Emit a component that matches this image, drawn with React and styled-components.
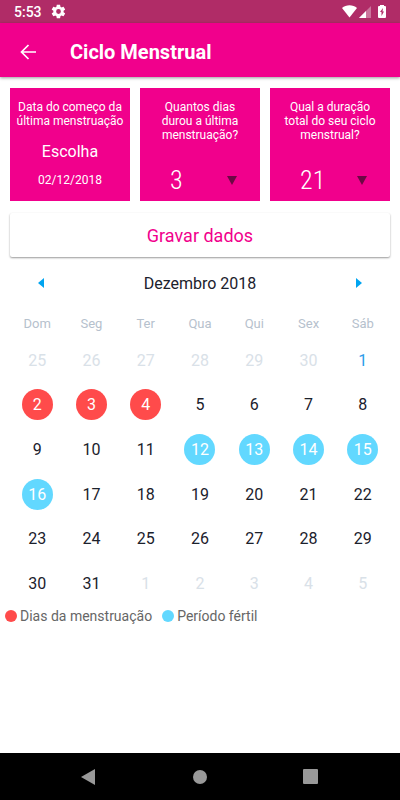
import React from "react";
import styled, { createGlobalStyle } from "styled-components";

const weekDays = ["Dom", "Seg", "Ter", "Qua", "Qui", "Sex", "Sáb"];

const weeks = [
  [25, 26, 27, 28, 29, 30, 1],
  [2, 3, 4, 5, 6, 7, 8],
  [9, 10, 11, 12, 13, 14, 15],
  [16, 17, 18, 19, 20, 21, 22],
  [23, 24, 25, 26, 27, 28, 29],
  [30, 31, 1, 2, 3, 4, 5]
];

const TODAY = 1;
const FERTILE_DAYS = [12, 13, 14, 15, 16];

const range = (from, to) =>
  Array.from({ length: to - from + 1 }, (_, i) => from + i);

const getDayKind = (week, day, periodLength) => {
  if ((week === 0 && day > 7) || (week === 5 && day < 7)) return "outside";
  if (day >= 2 && day < 2 + periodLength) return "period";
  if (FERTILE_DAYS.includes(day)) return "fertile";
  if (day === TODAY) return "today";
  return "normal";
};

const dayColors = {
  outside: "#d9e1e8",
  period: "#ffffff",
  fertile: "#ffffff",
  today: "#2d9cea",
  normal: "#1b212c"
};

const dayBackgrounds = {
  period: "#ff4b4b",
  fertile: "#62d8ff"
};

const App = () => {
  const [periodLength, setPeriodLength] = React.useState(3);
  const [cycleLength, setCycleLength] = React.useState(21);

  return (
    <Screen>
      <GlobalStyle />
      <StatusBar>
        <StatusGroup>
          <span>5:53</span>
          <svg width="15" height="15" viewBox="1 1 22 22" fill="#fff">
            <path d="M19.4 13a7.500 7.500 0 0 0 0-2l2.100-1.600c.2-.2.200-.4.100-.6l-2-3.500c-.1-.2-.4-.3-.6-.2l-2.500 1a7.300 7.300 0 0 0-1.700-1l-.4-2.600c0-.3-.2-.5-.5-.5h-4c-.3 0-.5.200-.5.500L9 5.100c-.6.300-1.200.6-1.700 1l-2.500-1c-.2-.1-.5 0-.6.200l-2 3.500c-.1.200-.1.500.1.600L4.500 11a7.500 7.500 0 0 0 0 2l-2.200 1.600c-.2.200-.2.400-.1.600l2 3.500c.1.200.4.300.6.200l2.500-1c.5.400 1.100.8 1.700 1l.4 2.600c0 .3.200.5.500.5h4c.3 0 .5-.2.500-.5l.4-2.600c.6-.3 1.200-.6 1.700-1l2.500 1c.2.100.5 0 .6-.2l2-3.500c.1-.2.100-.5-.1-.6zM12 15.500a3.500 3.500 0 1 1 0-7 3.500 3.500 0 0 1 0 7z" />
          </svg>
        </StatusGroup>
        <StatusIcons>
          <svg width="15" height="13" viewBox="0 0 15 13">
            <path d="M0 3C4-.7 11-.7 15 3L7.500 12.500z" fill="#fff" />
          </svg>
          <svg width="12" height="12" viewBox="0 0 12 12">
            <path d="M12 0v12H0z" fill="#fff" opacity=".35" />
            <path d="M7 5v7H0z" fill="#fff" />
          </svg>
          <svg width="8" height="13" viewBox="0 0 8 13">
            <path d="M2 1V0h4v1h1q1 0 1 1v10q0 1-1 1H1q-1 0-1-1V2q0-1 1-1z" fill="#fff" />
            <path d="M5 3L2 7h1.500v4L6 6.500H4.500z" fill="#b02c67" />
          </svg>
        </StatusIcons>
      </StatusBar>

      <Header>
        <BackButton aria-label="Voltar">
          <svg width="16" height="16" viewBox="0 0 16 16" fill="none" stroke="#fff" strokeWidth="1.700">
            <path d="M16 8H1.500M8.500 1L1.500 8l7 7" />
          </svg>
        </BackButton>
        <Title>Ciclo Menstrual</Title>
      </Header>

      <Content>
        <Cards>
          <Card $inset={6}>
            <CardLabel>Data do começo da última menstruação</CardLabel>
            <DateButton>Escolha</DateButton>
            <DateValue>02/12/2018</DateValue>
          </Card>
          <Card $inset={14}>
            <CardLabel as="label" htmlFor="period">
              Quantos dias durou a última menstruação?
            </CardLabel>
            <SelectBox>
              <Select
                id="period"
                value={periodLength}
                onChange={e => setPeriodLength(Number(e.target.value))}
              >
                {range(1, 10).map(n => (
                  <option key={n}>{n}</option>
                ))}
              </Select>
              <Caret />
            </SelectBox>
          </Card>
          <Card $inset={14}>
            <CardLabel as="label" htmlFor="cycle">
              Qual a duração total do seu ciclo menstrual?
            </CardLabel>
            <SelectBox>
              <Select
                id="cycle"
                value={cycleLength}
                onChange={e => setCycleLength(Number(e.target.value))}
              >
                {range(21, 35).map(n => (
                  <option key={n}>{n}</option>
                ))}
              </Select>
              <Caret />
            </SelectBox>
          </Card>
        </Cards>

        <SaveButton>Gravar dados</SaveButton>

        <MonthBar>
          <MonthButton aria-label="Mês anterior">
            <svg width="6" height="10" viewBox="0 0 6 10">
              <path d="M6 0v10L0 5z" fill="#00a4f0" />
            </svg>
          </MonthButton>
          <Month>Dezembro 2018</Month>
          <MonthButton aria-label="Próximo mês">
            <svg width="6" height="10" viewBox="0 0 6 10">
              <path d="M0 0v10l6-5z" fill="#00a4f0" />
            </svg>
          </MonthButton>
        </MonthBar>

        <Calendar>
          <thead>
            <tr>
              {weekDays.map(name => (
                <WeekDay key={name}>{name}</WeekDay>
              ))}
            </tr>
          </thead>
          <tbody>
            {weeks.map((week, i) => (
              <tr key={i}>
                {week.map(day => (
                  <DayCell key={day}>
                    <Day $kind={getDayKind(i, day, periodLength)}>{day}</Day>
                  </DayCell>
                ))}
              </tr>
            ))}
          </tbody>
        </Calendar>
      </Content>

      <Legend>
        <LegendItem>
          <Dot $color={dayBackgrounds.period} />
          Dias da menstruação
        </LegendItem>
        <LegendItem>
          <Dot $color={dayBackgrounds.fertile} />
          Período fértil
        </LegendItem>
      </Legend>

      <NavBar>
        <NavButton aria-label="Voltar">
          <svg width="16" height="16" viewBox="0 0 16 16" fill="#999">
            <path d="M14 0v16L0 8z" />
          </svg>
        </NavButton>
        <NavButton aria-label="Início">
          <svg width="16" height="16" viewBox="0 0 16 16" fill="#999">
            <circle cx="8" cy="8" r="7" />
          </svg>
        </NavButton>
        <NavButton aria-label="Recentes">
          <svg width="16" height="16" viewBox="0 0 16 16" fill="#999">
            <rect width="15" height="15" rx="1" />
          </svg>
        </NavButton>
      </NavBar>
    </Screen>
  );
};

const GlobalStyle = createGlobalStyle`
  * {
    box-sizing: border-box;
  }
  body {
    margin: 0;
    background: #fff;
    font-family: Roboto, sans-serif;
  }
  button, select {
    padding: 0;
    border: none;
    background: transparent;
    font-family: inherit;
    cursor: pointer;
  }
  svg {
    display: block;
  }
`;

const Screen = styled.div`
  display: flex;
  flex-direction: column;
  min-height: 100vh;
`;

const StatusBar = styled.div`
  display: flex;
  justify-content: space-between;
  align-items: center;
  height: 23px;
  padding: 0 14px;
  background: #b02c67;
  color: #fff;
  font-size: 14px;
  font-weight: 500;
`;

const StatusGroup = styled.div`
  display: flex;
  align-items: center;
  gap: 9px;
`;

const StatusIcons = styled.div`
  display: flex;
  align-items: center;
  gap: 2px;

  svg:last-child {
    margin-left: 5px;
  }
`;

const Header = styled.header`
  display: flex;
  align-items: center;
  gap: 34px;
  height: 54px;
  padding: 3px 20px 0;
  background: #f1008c;
  box-shadow: 0 1px 3px rgba(0, 0, 0, 0.4);
`;

const BackButton = styled.button`
  display: flex;
`;

const Title = styled.h1`
  margin: 0;
  color: #fff;
  font-size: 20px;
  font-weight: 700;
`;

const Content = styled.main`
  padding: 11px 10px 0;
`;

const Cards = styled.div`
  display: grid;
  grid-template-columns: repeat(3, 1fr);
  gap: 10px;
`;

const Card = styled.section`
  display: flex;
  flex-direction: column;
  align-items: center;
  height: 113px;
  padding-top: 12px;
  background: #f1008c;
  color: #fff;
  text-align: center;

  > :first-child {
    padding: 0 ${({ $inset }) => $inset}px;
  }
`;

const CardLabel = styled.span`
  font-size: 12px;
  line-height: 14px;
`;

const DateButton = styled.button`
  margin-top: 14px;
  color: #fff;
  font-size: 16px;
  line-height: 20px;
`;

const DateValue = styled.span`
  margin-top: 10px;
  font-size: 12px;
  line-height: 16px;
`;

const SelectBox = styled.div`
  display: flex;
  align-items: center;
  align-self: stretch;
  margin-top: 20px;
`;

const Select = styled.select`
  appearance: none;
  flex: 1;
  height: 36px;
  padding-left: 30px;
  color: #fff;
  font-family: "Roboto Condensed", "Liberation Sans Narrow", Roboto, sans-serif;
  font-size: 26px;
  font-weight: 300;

  option {
    color: #151a23;
  }
`;

const Caret = styled.span`
  margin-right: 23px;
  border: 5px solid transparent;
  border-top: 9px solid #6d0844;
  border-bottom: none;
  pointer-events: none;
`;

const SaveButton = styled.button`
  width: 100%;
  height: 44px;
  margin-top: 12px;
  border-radius: 2px;
  background: #fff;
  box-shadow: 0 1px 2px rgba(0, 0, 0, 0.4);
  color: #f1008c;
  font-size: 18px;
`;

const MonthBar = styled.div`
  display: flex;
  justify-content: space-between;
  align-items: center;
  height: 40px;
  margin-top: 6px;
  padding: 0 18px;
`;

const MonthButton = styled.button`
  display: flex;
  padding: 10px;
`;

const Month = styled.h2`
  margin: 0;
  color: #1b212c;
  font-size: 16px;
  font-weight: 400;
`;

const Calendar = styled.table`
  width: 100%;
  height: 298px;
  margin-top: 5px;
  border-collapse: collapse;
  table-layout: fixed;
`;

const WeekDay = styled.th`
  height: 30px;
  padding: 0;
  color: #b6c1cd;
  font-size: 13px;
  font-weight: 400;
`;

const DayCell = styled.td`
  padding: 0;
  text-align: center;
`;

const Day = styled.button`
  width: 31px;
  height: 31px;
  border-radius: 50%;
  background: ${({ $kind }) => dayBackgrounds[$kind] || "transparent"};
  color: ${({ $kind }) => dayColors[$kind]};
  font-size: 16px;
`;

const Legend = styled.div`
  display: flex;
  gap: 10px;
  padding: 1px 5px;
`;

const LegendItem = styled.div`
  display: flex;
  align-items: center;
  gap: 3px;
  color: #666;
  font-size: 14px;
  line-height: 18px;
`;

const Dot = styled.span`
  width: 12px;
  height: 12px;
  border-radius: 50%;
  background: ${({ $color }) => $color};
`;

const NavBar = styled.nav`
  display: flex;
  justify-content: center;
  align-items: center;
  gap: 95px;
  height: 47px;
  margin-top: auto;
  background: #000;
`;

const NavButton = styled.button`
  display: flex;
`;

export default App;
